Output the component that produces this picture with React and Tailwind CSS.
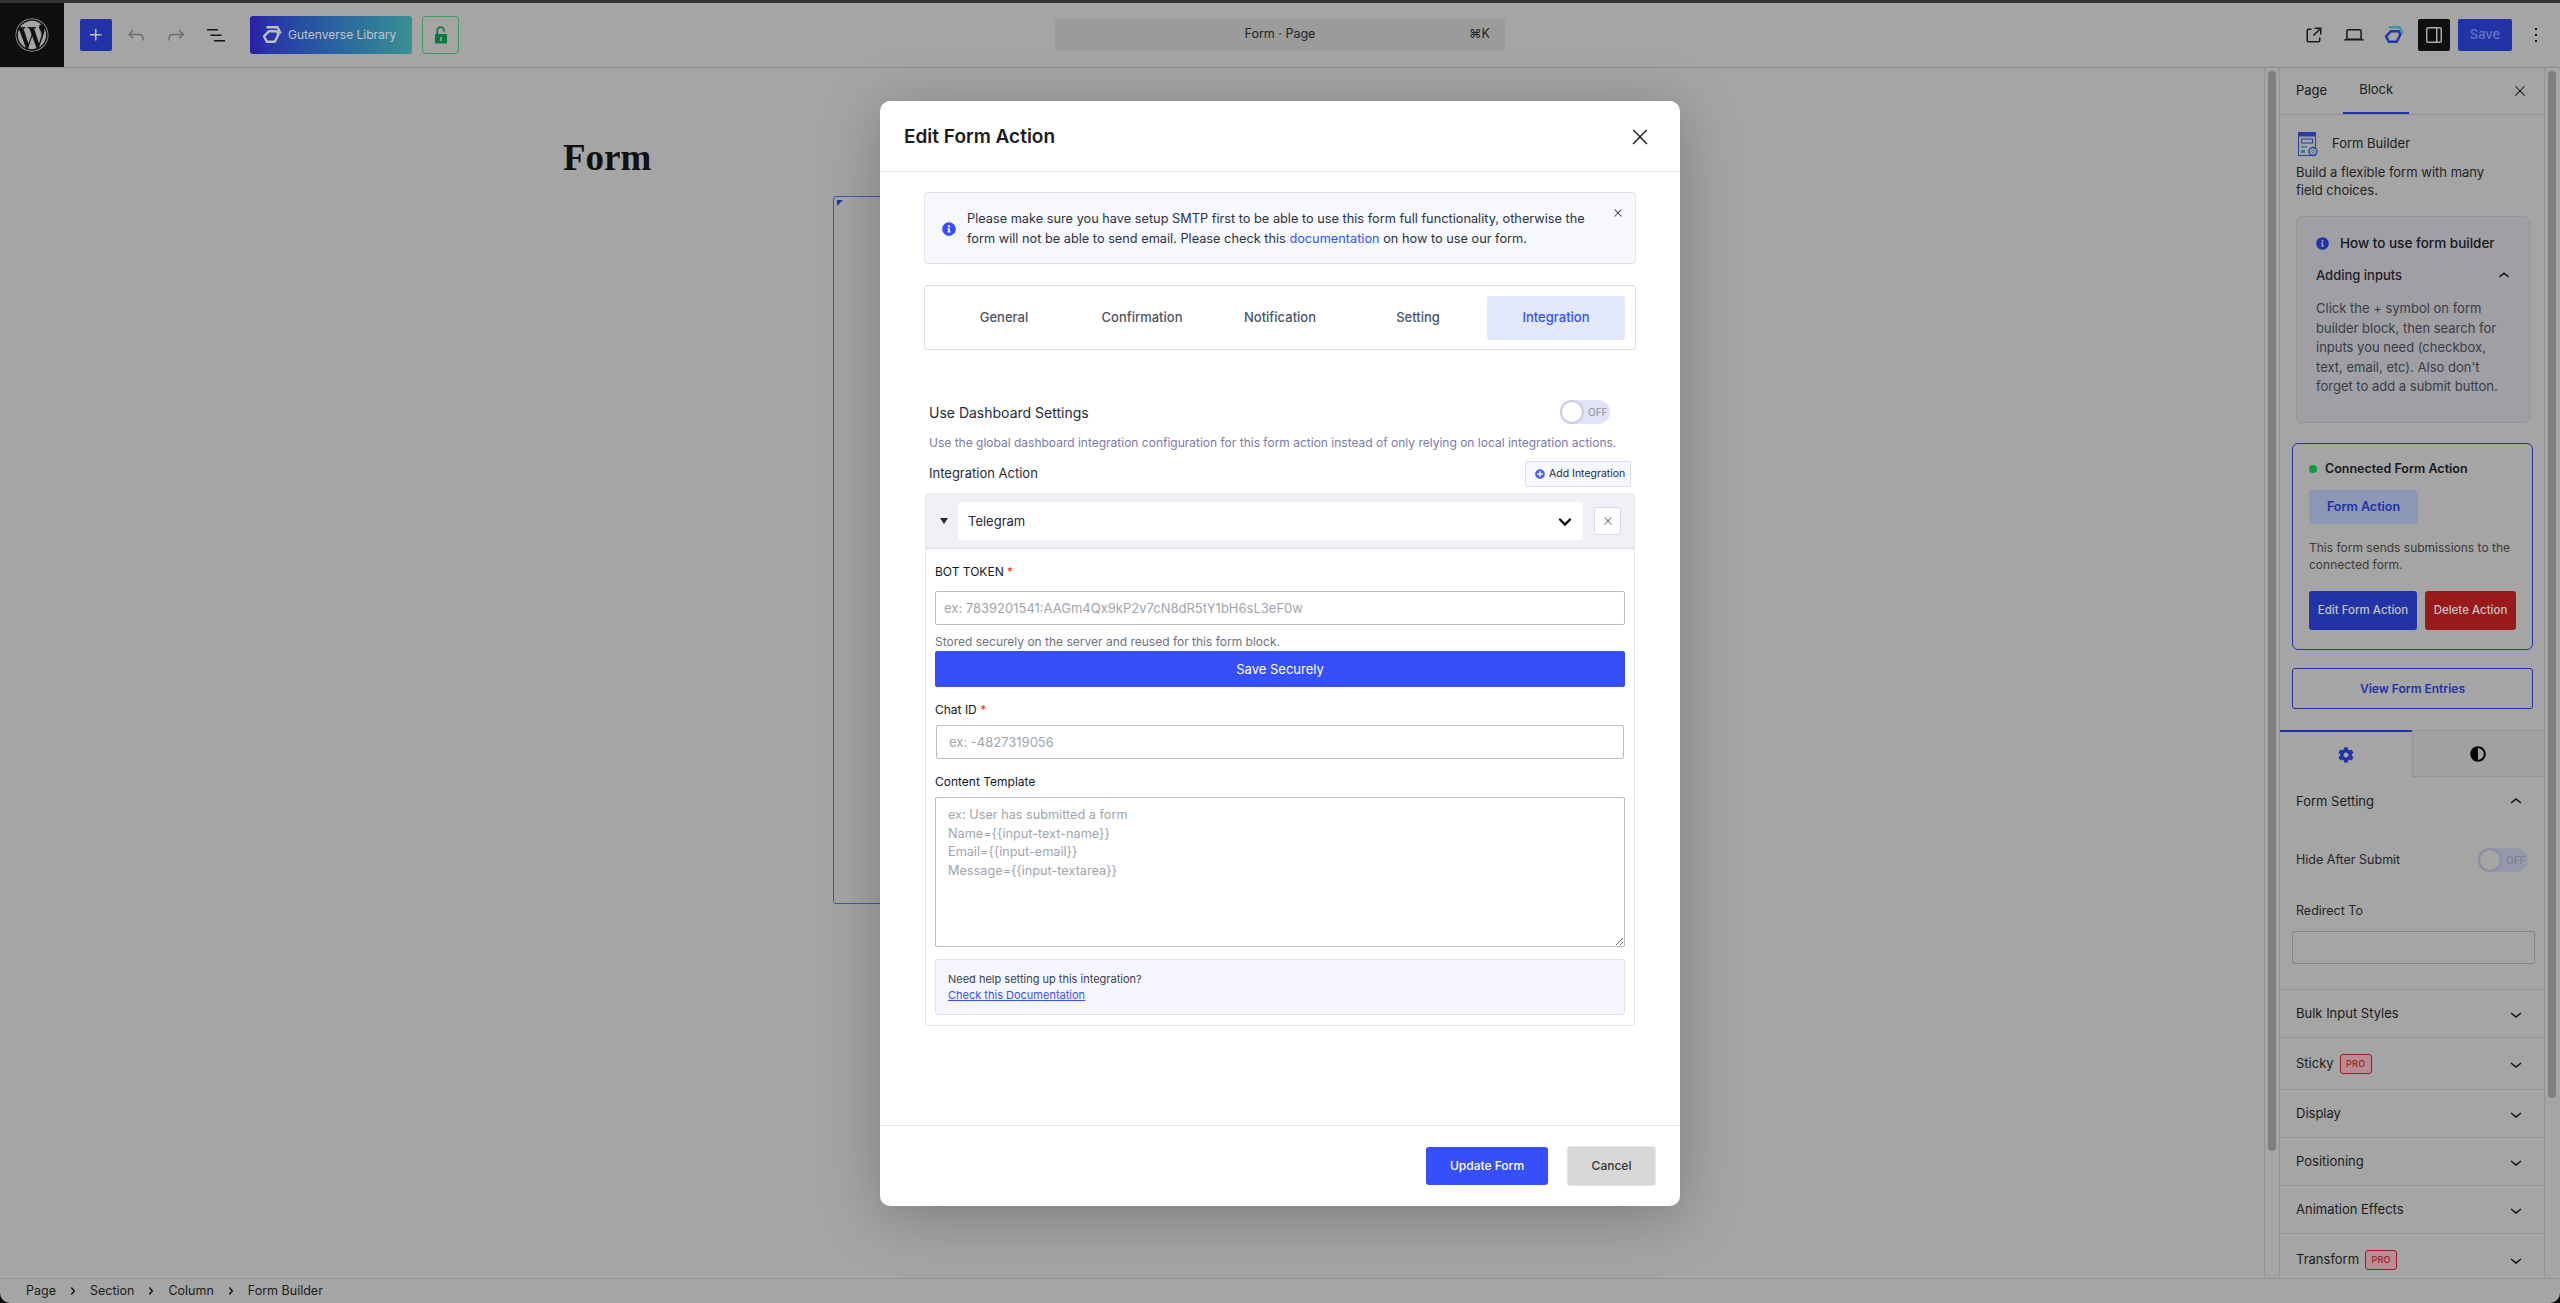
import React from 'react';
import { FaWordpress, FaInfoCircle, FaCog, FaAdjust, FaPlusCircle } from 'react-icons/fa';

const WpIcon = ({ d, size = 24, className = '' }) => (
  <svg width={size} height={size} viewBox="0 0 24 24" fill="currentColor" className={`shrink-0 ${className}`}>
    <path d={d} />
  </svg>
);

const paths = {
  plus: 'M11 12.5V17.5H12.5V12.5H17.5V11H12.5V6H11V11H6V12.5H11Z',
  undo: 'M18.3 11.7c-.6-.6-1.4-.9-2.3-.9H6.7l2.9-3.3-1.1-1-4.5 5L8.5 16l1-1-2.7-2.7H16c.5 0 .9.2 1.3.5 1 1 1 3.4 1 4.5v.3h1.5v-.2c0-1.5 0-4.3-1.5-5.7z',
  redo: 'M15.6 6.5l-1.1 1 2.9 3.3H8c-.9 0-1.7.3-2.3.9-1.4 1.5-1.4 4.2-1.4 5.6v.2h1.5v-.3c0-1.1 0-3.5 1-4.5.3-.3.7-.5 1.3-.5h9.2L14.5 15l1.1 1.1 4.6-4.6-4.6-5z',
  list: 'M3 6h11v1.5H3V6Zm3.5 5.5h11V13h-11v-1.5ZM21 17H10v1.5h11V17Z',
  external: 'M19.5 4.5h-7V6h4.44l-5.97 5.97 1.06 1.06L18 7.06v4.44h1.5v-7Zm-13 1a2 2 0 0 0-2 2v10a2 2 0 0 0 2 2h10a2 2 0 0 0 2-2v-3H17v3a.5.5 0 0 1-.5.5h-10a.5.5 0 0 1-.5-.5v-10a.5.5 0 0 1 .5-.5h3V5.5h-3Z',
  laptop: 'M20.5 16h-.7V8c0-1.1-.9-2-2-2H6.2c-1.1 0-2 .9-2 2v8h-.7c-.8 0-1.5.7-1.5 1.5h20c0-.8-.7-1.5-1.5-1.5zM5.7 8c0-.3.2-.5.5-.5h11.6c.3 0 .5.2.5.5v7.6H5.7V8z',
  sidebar: 'M18 4H6c-1.1 0-2 .9-2 2v12c0 1.1.9 2 2 2h12c1.1 0 2-.9 2-2V6c0-1.1-.9-2-2-2zM8.5 18.5H6c-.3 0-.5-.2-.5-.5V6c0-.3.2-.5.5-.5h2.5v13zm10-.5c0 .3-.2.5-.5.5h-8v-13h8c.3 0 .5.2.5.5v12z',
  dots: 'M13 19h-2v-2h2v2zm0-6h-2v-2h2v2zm0-6h-2V5h2v2z',
  down: 'M17.5 11.6L12 16l-5.5-4.4.9-1.2L12 14l4.5-3.6 1 1.2z',
  up: 'M6.5 12.4L12 8l5.5 4.4-.9 1.2L12 10l-4.5 3.6-1-1.2z',
  close: 'M13 11.8l6.1-6.3-1-1-6.1 6.2-6.1-6.2-1 1 6.1 6.3-6.5 6.7 1 1 6.5-6.6 6.5 6.6 1-1z',
  crumb: 'M10.8622 8.04053L14.2805 12.0286L10.8622 16.0167L9.72327 15.0405L12.3049 12.0286L9.72327 9.01672L10.8622 8.04053Z',
};

const GutenLogo = ({ top, bottom, className = '' }) => (
  <svg width="20" height="18" viewBox="0 0 20 18" fill="none" className={className}>
    <path d="M4.5 1.2H15.5L18.6 7.6" stroke={top} strokeWidth="2.4" />
    <path d="M2 10.4L7 5.2H14.6L16.4 8.4L12.8 15.8H5Z" stroke={bottom} strokeWidth="2.4" strokeLinejoin="round" />
  </svg>
);

const FormBuilderIcon = () => (
  <svg width="20" height="25" viewBox="0 0 20 25" fill="none" className="shrink-0">
    <rect x="0.5" y="0.5" width="17" height="23" stroke="#2b3ca3" />
    <rect x="0.5" y="0.5" width="17" height="4" fill="#2b3ca3" />
    <rect x="3.5" y="7" width="11" height="4" stroke="#2b3ca3" />
    <rect x="3" y="14" width="6" height="1.5" fill="#2f7f96" />
    <rect x="3" y="18" width="4" height="3" fill="#2f7f96" />
    <circle cx="15" cy="19.5" r="4" fill="#a5a5a5" stroke="#2b3ca3" strokeWidth="1.4" />
    <circle cx="15" cy="19.5" r="1.4" stroke="#2f7f96" />
  </svg>
);

const LockOpenIcon = () => (
  <svg width="14" height="18" viewBox="0 0 14 18" fill="none">
    <path d="M3.2 9V4.6a3.4 3.4 0 0 1 6.8 0V5.6" stroke="#0b7a3e" strokeWidth="1.8" />
    <rect x="1" y="8" width="12" height="9.5" rx="1" fill="#0b7a3e" />
    <rect x="6.2" y="11" width="1.6" height="4" fill="#a5a5a5" />
  </svg>
);

const Toggle = ({ track, knob, border, label, className = '' }) => (
  <div className={`flex items-center rounded-full ${className}`} style={{ background: track }}>
    <div className="h-[24px] w-[24px] rounded-full border-2" style={{ background: knob, borderColor: border }} />
    <span className="ml-[4px] text-[10px] leading-none" style={{ color: label }}>OFF</span>
  </div>
);

const ProBadge = () => (
  <span className="flex h-[20px] w-[32px] items-center justify-center rounded-[3px] border border-[#9c1a22] bg-[#b98d92] text-[9px] font-medium tracking-[0.3px] text-[#99222b]">
    PRO
  </span>
);

const SidebarRow = ({ label, pro, height }) => (
  <div className={`flex items-center justify-between border-t border-[#939393] pl-[16px] pr-[16px] ${height}`}>
    <div className="flex items-center gap-[6px]">
      <span className="text-[13px] text-[#1b1b1b]">{label}</span>
      {pro && <ProBadge />}
    </div>
    <WpIcon d={paths.down} className="text-[#161616]" />
  </div>
);

const Header = () => (
  <header className="flex h-[65px] shrink-0 items-center border-b border-[#8f8f8f] pb-px">
    <div className="flex h-[64px] w-[64px] items-center justify-center bg-[#0f0f0f]">
      <FaWordpress size={34} className="text-[#a5a5a5]" />
    </div>
    <div className="ml-[16px] flex h-[32px] w-[32px] items-center justify-center rounded-[2px] bg-[#2133a6] text-[#c2c2c2]">
      <WpIcon d={paths.plus} />
    </div>
    <WpIcon d={paths.undo} className="ml-[12px] text-[#6e6e6e]" />
    <WpIcon d={paths.redo} className="ml-[16px] text-[#6e6e6e]" />
    <WpIcon d={paths.list} className="ml-[16px] text-[#131313]" />
    <div className="ml-[22px] flex h-[38px] w-[162px] items-center rounded-[3px] bg-gradient-to-r from-[#2a1fa8] to-[#3a9092] pl-[12px]">
      <GutenLogo top="#bfbfbf" bottom="#bfbfbf" />
      <span className="ml-[6px] whitespace-nowrap text-[12px] text-[#c4c4c4]">Gutenverse Library</span>
    </div>
    <div className="ml-[10px] flex h-[38px] w-[37px] items-center justify-center rounded-[4px] border border-[#3c9a62]">
      <LockOpenIcon />
    </div>
    <div className="ml-[596px] flex h-[32px] w-[450px] items-center justify-center relative rounded-[3px] bg-[#9b9b9b] text-[12.5px] text-[#222]">
      Form · Page
      <span className="absolute right-[15px]">⌘K</span>
    </div>
    <div className="ml-auto flex items-center">
      <WpIcon d={paths.external} className="text-[#181818]" />
      <WpIcon d={paths.laptop} className="ml-[16px] text-[#181818]" />
      <GutenLogo top="#3a9a9a" bottom="#2133a6" className="ml-[18px]" />
      <div className="ml-[14px] flex h-[32px] w-[32px] items-center justify-center rounded-[2px] bg-[#0f0f0f] text-[#a8a8a8]">
        <WpIcon d={paths.sidebar} className="-scale-x-100" />
      </div>
      <div className="ml-[8px] flex h-[32px] w-[54px] items-center justify-center rounded-[2px] bg-[#2133a6] text-[13px] font-medium text-[#6275c4]">
        Save
      </div>
      <WpIcon d={paths.dots} className="ml-[12px] mr-[12px] text-[#111]" />
    </div>
  </header>
);

const Sidebar = () => (
  <aside className="w-[266px] shrink-0 overflow-hidden border-x border-[#939393]">
    <div className="flex h-[47px] items-stretch border-b border-[#939393] text-[13px] text-[#1b1b1b]">
      <div className="flex items-center px-[16px]">Page</div>
      <div className="flex items-center border-b-2 border-[#2133a6] px-[16px]">Block</div>
      <WpIcon d={paths.close} size={16} className="ml-auto mr-[16px] mt-[15px] text-[#141414]" />
    </div>

    <div className="ml-[18px] mt-[17px] flex h-[24px] items-center gap-[14px] text-[13px] text-[#1b1b1b]">
      <FormBuilderIcon />
      Form Builder
    </div>
    <p className="ml-[16px] mt-[7px] w-[200px] text-[13px] leading-[18px] text-[#232323]">
      Build a flexible form with many field choices.
    </p>

    <div className="ml-[16px] mt-[17px] h-[207px] w-[234px] rounded-[6px] border border-[#93939a] bg-[#9f9fa4] pl-[19px] pr-[15px] pt-[17px]">
      <div className="flex h-[18px] items-center gap-[11px] text-[13.5px] font-medium text-[#14161c]">
        <FaInfoCircle size={13} className="text-[#2133a6]" />
        How to use form builder
      </div>
      <div className="mt-[15px] flex h-[18px] items-center justify-between text-[13px] font-medium text-[#1d2026]">
        Adding inputs
        <WpIcon d={paths.up} size={22} className="-mr-[1px] text-[#14161c]" />
      </div>
      <p className="mt-[14px] text-[13px] leading-[19.5px] text-[#383c45]">
        Click the + symbol on form builder block, then search for inputs you need (checkbox, text, email, etc). Also don't forget to add a submit button.
      </p>
    </div>

    <div className="ml-[12px] mt-[20px] h-[207px] w-[241px] rounded-[6px] border border-[#2133a6] pl-[16px] pt-[16px]">
      <div className="flex h-[18px] items-center gap-[8px] text-[12.5px] font-semibold text-[#16181d]">
        <span className="h-[8px] w-[8px] rounded-full bg-[#0f9a3c]" />
        Connected Form Action
      </div>
      <div className="mt-[12px] flex h-[34px] w-[109px] items-center justify-center rounded-[3px] bg-[#8b97b4] text-[12.5px] font-semibold text-[#2133a6]">
        Form Action
      </div>
      <p className="mt-[15px] w-[215px] text-[12px] leading-[17px] text-[#3d3a36]">
        This form sends submissions to the connected form.
      </p>
      <div className="mt-[18px] flex gap-[8px]">
        <div className="flex h-[39px] w-[108px] items-center justify-center rounded-[3px] bg-[#2133a6] text-[11.5px] font-medium text-[#c4c4c4]">
          Edit Form Action
        </div>
        <div className="flex h-[39px] w-[91px] items-center justify-center rounded-[3px] bg-[#9a1a1c] text-[11.5px] font-medium text-[#c4c4c4]">
          Delete Action
        </div>
      </div>
    </div>

    <div className="ml-[12px] mt-[18px] flex h-[41px] w-[241px] items-center justify-center rounded-[3px] border border-[#2133a6] text-[12px] font-semibold text-[#2133a6]">
      View Form Entries
    </div>

    <div className="mt-[21px] flex h-[47px]">
      <div className="flex flex-1 items-center justify-center border-t-2 border-[#2133a6] text-[#2133a6]">
        <FaCog size={16} />
      </div>
      <div className="flex flex-1 items-center justify-center border-b border-l border-t border-[#939393] bg-[#a1a1a1] text-[#050505]">
        <FaAdjust size={16} />
      </div>
    </div>

    <div className="flex h-[50px] items-center justify-between pl-[16px] pr-[16px] text-[13px] text-[#1b1b1b]">
      Form Setting
      <WpIcon d={paths.up} className="text-[#161616]" />
    </div>
    <div className="mt-[16px] flex h-[34px] items-center justify-between pl-[16px] pr-[16px] text-[12.5px] text-[#262626]">
      Hide After Submit
      <Toggle track="#9599ab" knob="#a5a5a5" border="#8a8ea0" label="#7a7d88" className="h-[24px] w-[50px]" />
    </div>
    <div className="ml-[16px] mt-[26px] text-[12.5px] leading-[16px] text-[#262626]">Redirect To</div>
    <div className="ml-[12px] mt-[12px] h-[33px] w-[243px] rounded-[2px] border border-[#858585]" />

    <div className="mt-[25px]">
      <SidebarRow label="Bulk Input Styles" height="h-[48px]" />
      <SidebarRow label="Sticky" pro height="h-[52px]" />
      <SidebarRow label="Display" height="h-[48px]" />
      <SidebarRow label="Positioning" height="h-[48px]" />
      <SidebarRow label="Animation Effects" height="h-[48px]" />
      <SidebarRow label="Transform" pro height="h-[52px]" />
    </div>
  </aside>
);

const IntegrationBox = () => (
  <div className="mx-px mt-[6px] rounded-[3px] border border-[#e2e4ea]">
    <div className="flex h-[55px] items-center border-b border-[#dcdee4] bg-[#eff1f6]">
      <span className="ml-[14px] h-0 w-0 border-x-[4px] border-t-[6px] border-x-transparent border-t-[#1f2937]" />
      <div className="ml-[10px] flex h-[38px] w-[625px] items-center justify-between rounded-[3px] bg-white pl-[10px] pr-[11px] pt-[1px] text-[13px] text-[#1f2937]">
        Telegram
        <svg width="14" height="14" viewBox="0 0 14 14" fill="none" stroke="#111" strokeWidth="2.4" strokeLinecap="round">
          <path d="M2 4.5L7 9.5L12 4.5" />
        </svg>
      </div>
      <div className="ml-[11px] flex h-[28px] w-[27px] items-center justify-center rounded-[3px] border border-[#d9dbe3] bg-white text-[#555]">
        <WpIcon d={paths.close} size={12} />
      </div>
    </div>
    <div className="px-[9px] pb-[10px] pt-[15px]">
      <label className="block text-[12px] leading-[16px] text-[#111827]">
        BOT TOKEN <span className="text-[#ef2b2b]">*</span>
      </label>
      <input
        placeholder="ex: 7839201541:AAGm4Qx9kP2v7cN8dR5tY1bH6sL3eF0w"
        className="mt-[11px] block h-[34px] w-full rounded-[2px] border border-[#bdbdbd] bg-white pl-[8px] text-[13px] outline-none placeholder:text-[#a0a5ad]"
      />
      <p className="mt-[9px] text-[12px] leading-[16px] text-[#6b7280]">
        Stored securely on the server and reused for this form block.
      </p>
      <div className="mt-px flex h-[36px] items-center justify-center rounded-[2px] bg-[#364ffb] pt-[1px] text-[13px] font-normal text-white">
        Save Securely
      </div>
      <label className="mt-[15px] block text-[12px] leading-[16px] text-[#111827]">
        Chat ID <span className="text-[#ef2b2b]">*</span>
      </label>
      <input
        placeholder="ex: -4827319056"
        className="mx-px mt-[7px] block h-[34px] w-[688px] rounded-[2px] border border-[#bdbdbd] bg-white pl-[12px] text-[13px] outline-none placeholder:text-[#a0a5ad]"
      />
      <label className="mt-[15px] block text-[12px] leading-[16px] text-[#111827]">
        Content Template
      </label>
      <textarea
        placeholder={'ex: User has submitted a form\nName={{input-text-name}}\nEmail={{input-email}}\nMessage={{input-textarea}}'}
        className="mt-[7px] block h-[150px] w-full rounded-[2px] border border-[#bdbdbd] bg-white pl-[12px] pt-[8px] text-[12.7px] leading-[18.7px] outline-none placeholder:text-[#a0a5ad]"
      />
      <div className="mt-[12px] h-[56px] rounded-[3px] border border-[#dfe2ee] bg-[#f5f6fe] pl-[12px] pt-[11px] text-[11px] leading-[16px]">
        <p className="text-[#374151]">Need help setting up this integration?</p>
        <a className="text-[#364ffb] underline">Check this Documentation</a>
      </div>
    </div>
  </div>
);

const Modal = () => (
  <div className="absolute left-[880px] top-[101px] flex h-[1105px] w-[800px] flex-col rounded-[10px] bg-white shadow-[0_10px_60px_rgba(0,0,0,0.25)]">
    <div className="flex h-[71px] shrink-0 items-center justify-between border-b border-[#e6e6e6] pl-[24px] pr-[28px] pt-[2px]">
      <h2 className="text-[19px] font-semibold text-[#1b1b1b]">Edit Form Action</h2>
      <WpIcon d={paths.close} size={24} className="text-[#222]" />
    </div>

    <div className="flex-1 px-[44px] pt-[20px]">
      <div className="relative flex h-[72px] items-center rounded-[4px] border border-[#dfe2ee] bg-[#f7f8fd] pl-[17px] pr-[40px] pt-[1px]">
        <FaInfoCircle size={14} className="shrink-0 text-[#364ffb]" />
        <p className="ml-[11px] text-[12.75px] leading-[20px] text-[#2b3340]">
          Please make sure you have setup SMTP first to be able to use this form full functionality, otherwise the form will not be able to send email. Please check this <a className="text-[#364ffb]">documentation</a> on how to use our form.
        </p>
        <WpIcon d={paths.close} size={12} className="absolute right-[11px] top-[14px] text-[#222]" />
      </div>

      <div className="mt-[21px] flex h-[65px] items-center justify-center rounded-[3px] border border-[#dcdde3] text-[13px] font-medium text-[#4b5563]">
        {['General', 'Confirmation', 'Notification', 'Setting'].map(tab => (
          <div className="flex h-[44px] w-[138px] items-center justify-center" key={tab}>{tab}</div>
        ))}
        <div className="flex h-[44px] w-[138px] items-center justify-center rounded-[3px] bg-[#e2e7fa] text-[#364ffb]">
          Integration
        </div>
      </div>

      <div className="mt-[50px] flex h-[24px] items-center justify-between pl-[5px] pr-[26px] text-[14px] text-[#1f2937]">
        Use Dashboard Settings
        <Toggle track="#e0e4f6" knob="#ffffff" border="#c9cde0" label="#8b8fa3" className="h-[24px] w-[50px]" />
      </div>
      <p className="mt-[10px] pl-[5px] text-[12px] leading-[18px] text-[#7b7ba8]">
        Use the global dashboard integration configuration for this form action instead of only relying on local integration actions.
      </p>
      <div className="mt-[9px] flex h-[26px] items-center justify-between pl-[5px] pr-[5px] text-[13px] text-[#1f2937]">
        Integration Action
        <div className="flex h-[26px] w-[106px] items-center rounded-[2px] border border-[#d8dcec] bg-[#f7f8fe] pl-[9px] text-[10.5px] text-[#1f2937]">
          <FaPlusCircle size={10} className="mr-[4px] text-[#4a62f5]" />
          Add Integration
        </div>
      </div>
      <IntegrationBox />
    </div>

    <div className="flex h-[81px] shrink-0 items-center justify-end border-t border-[#e6e6e6] pr-[24px]">
      <div className="flex h-[38px] w-[122px] items-center justify-center rounded-[3px] bg-[#364ffb] text-[12px] font-medium text-white">
        Update Form
      </div>
      <div className="ml-[19px] flex h-[40px] w-[89px] items-center justify-center rounded-[3px] border border-[#e6e6e6] bg-[#d8d8d8] text-[12px] font-medium text-[#333]">
        Cancel
      </div>
    </div>
  </div>
);

const App = () => {
  return (
    <div className="h-[1303px] w-[2560px] overflow-hidden bg-[#0a0a0a] [font-family:Inter,sans-serif]">
      <div className="relative flex h-full flex-col overflow-hidden rounded-b-[10px] bg-[#a5a5a5]">
        <div className="h-[3px] shrink-0 bg-[#333333]" />
        <Header />

        <div className="flex min-h-0 flex-1">
          <main className="min-w-0 flex-1 border-r border-[#939393]">
            <h1 className="ml-[563px] mt-[68px] w-fit text-[37px] font-bold leading-[44px] text-[#111] [font-family:'Liberation_Serif',serif]">
              Form
            </h1>
            <div className="relative ml-[833px] mt-[16px] h-[708px] w-[800px] rounded-[3px] border border-[#4a54a8]">
              <span className="absolute left-[3px] top-[3px] h-0 w-0 border-r-[6px] border-t-[6px] border-r-transparent border-t-[#2133a6]" />
            </div>
          </main>
          <div className="w-[14px] shrink-0 pl-[3px] pt-[3px]">
            <div className="h-[1080px] w-[8px] rounded-full bg-[#7f7f7f]" />
          </div>
          <Sidebar />
          <div className="w-[15px] shrink-0 pl-[3px] pt-[3px]">
            <div className="h-[1027px] w-[8px] rounded-full bg-[#7f7f7f]" />
          </div>
        </div>

        <footer className="flex h-[25px] shrink-0 items-center border-t border-[#939393] pl-[26px] text-[12.5px] text-[#1b1b1b]">
          <span>Page</span>
          <WpIcon d={paths.crumb} className="mx-[5px]" />
          <span>Section</span>
          <WpIcon d={paths.crumb} className="mx-[5px]" />
          <span>Column</span>
          <WpIcon d={paths.crumb} className="mx-[5px]" />
          <span>Form Builder</span>
        </footer>

        <Modal />
      </div>
    </div>
  );
};

export default App;
